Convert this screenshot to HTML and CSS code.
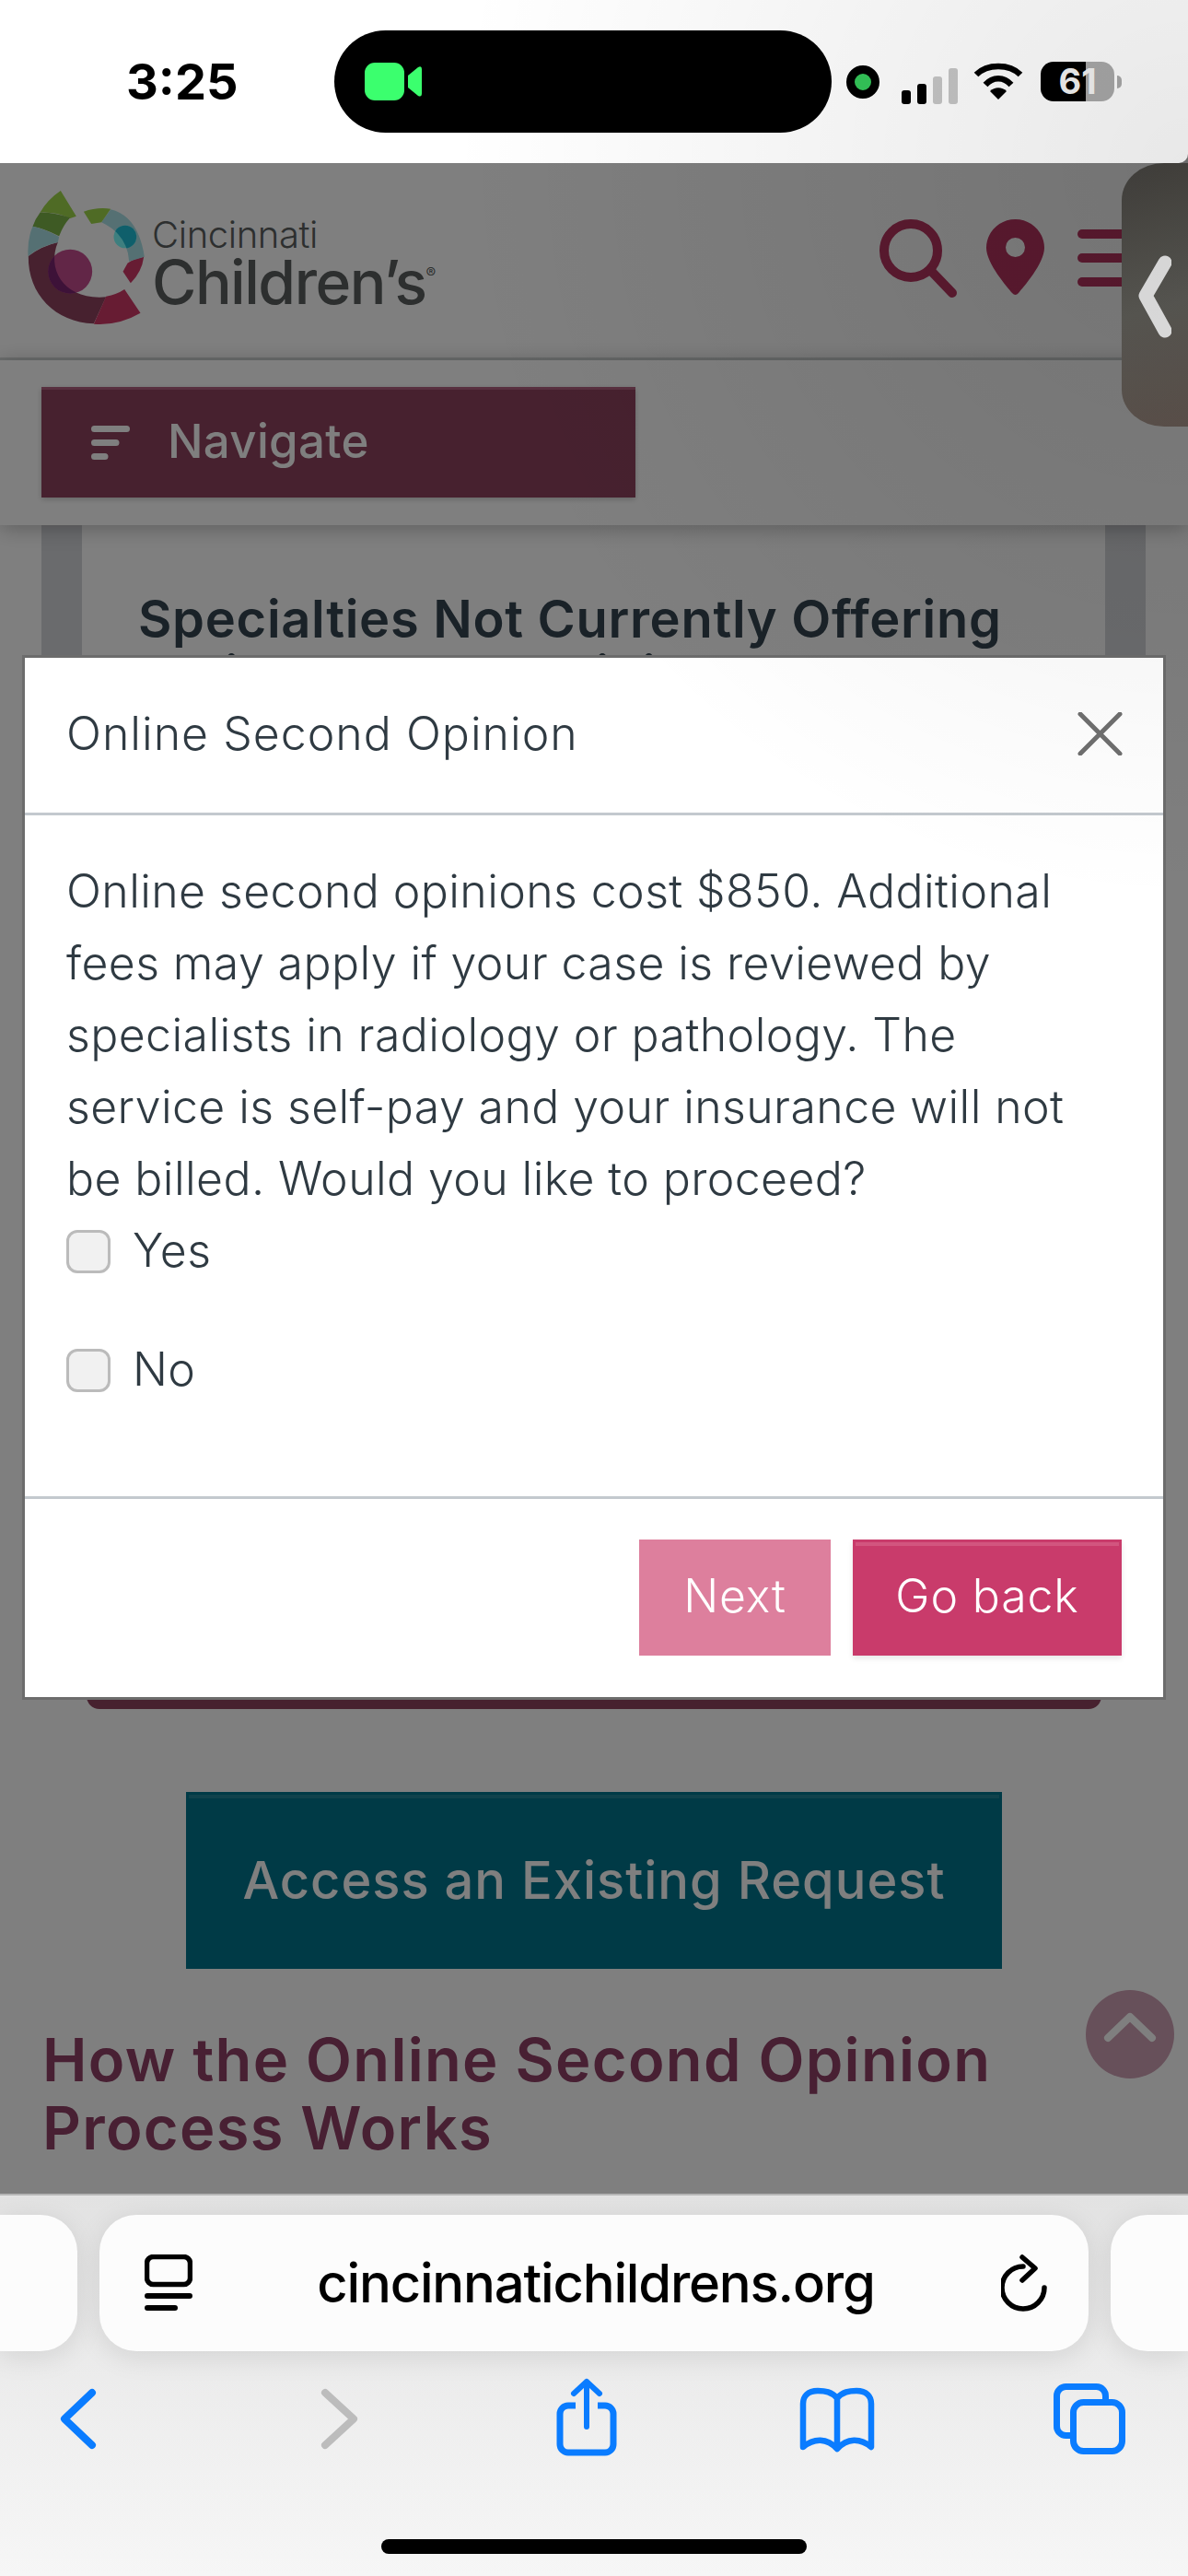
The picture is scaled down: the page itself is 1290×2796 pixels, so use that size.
FILE: index.html
```html
<!DOCTYPE html>
<html lang="en">
  <head>
    <meta charset="UTF-8" />
    <meta name="viewport" content="width=device-width, initial-scale=1.0" />
    <title>Online Second Opinion</title>
    <link rel="stylesheet" href="styles.css">
  </head>
  <body>
    <div class="phone">
      <header class="statusBar">
        <span class="time">3:25</span>
        <div class="island">
          <svg class="camIcon" width="62" height="42" viewBox="0 0 62 42">
            <rect x="0" y="0" width="43" height="41" rx="11" fill="#3bff6e" />
            <path d="M47 14 L58 5 Q62 3 62 7 V33 Q62 38 58 36 L47 27 Z" fill="#3bff6e" />
          </svg>
        </div>
        <span class="micDot"></span>
        <svg class="signal" width="61" height="39" viewBox="0 0 61 39">
          <rect x="0" y="24" width="10" height="15" rx="3" fill="#000" />
          <rect x="17" y="17" width="10" height="22" rx="3" fill="#000" />
          <rect x="34" y="9" width="10" height="30" rx="3" fill="#c6c6c6" />
          <rect x="51" y="0" width="10" height="39" rx="3" fill="#c6c6c6" />
        </svg>
        <svg class="wifi" width="54" height="40" viewBox="0 0 54 40">
          <path d="M3 13 C15 1 39 1 51 13" fill="none" stroke="#000" stroke-width="6.5" />
          <path d="M13 24 C21 15 33 15 41 24" fill="none" stroke="#000" stroke-width="6.5" />
          <path d="M18 31 C23 26 31 26 36 31 L27 40 Z" fill="#000" />
        </svg>
        <div class="battery">61</div>
        <span class="batteryNub"></span>
      </header>

      <div class="page">
        <div class="siteHeader">
          <div class="logo">
            <svg class="logoMark" width="127" height="145" viewBox="90 82 380 435">
              <defs>
                <clipPath id="plumArc"><path d="M92 295 Q135 262 188 250 C150 340 210 440 345 428 L305 515 C180 510 90 420 92 295 Z" /></clipPath>
                <clipPath id="tealArc"><path d="M360 143 Q450 165 470 297 L420 312 Q415 225 330 185 Z" /></clipPath>
              </defs>
              <path d="M92 295 Q135 262 188 250 C150 340 210 440 345 428 L305 515 C180 510 90 420 92 295 Z" fill="#8e425e" />
              <path d="M345 426 Q380 420 405 403 L457 480 Q385 522 305 516 Z" fill="#ce3866" />
              <path d="M468 297 Q430 305 415 318 L400 345 L425 383 Q462 345 468 297 Z" fill="#ce3866" />
              <path d="M360 143 Q450 165 470 297 L420 312 Q415 225 330 185 Z" fill="#aae0e6" />
              <path d="M272 150 Q315 135 360 141 L330 185 L297 190 Z" fill="#9ed64a" />
              <path d="M197 82 L248 165 L228 172 Q180 150 130 153 Q155 110 197 82 Z" fill="#9ed64a" />
              <path d="M130 153 Q180 152 228 170 Q205 195 192 230 Q145 205 106 198 Q115 172 130 153 Z" fill="#7cb448" />
              <path d="M106 198 Q150 208 192 232 L188 250 Q130 262 91 295 Q88 240 106 198 Z" fill="#aae0e6" />
              <circle cx="228" cy="345" r="72" fill="#c44c8e" />
              <circle cx="228" cy="345" r="72" fill="#7a2470" clip-path="url(#plumArc)" />
              <circle cx="407" cy="232" r="37" fill="#7cffff" />
              <circle cx="407" cy="232" r="37" fill="#1ebed6" clip-path="url(#tealArc)" />
            </svg>
            <div class="logoText">
              <span class="logoCity">Cincinnati</span>
              <span class="logoName">Children’s<sup>®</sup></span>
            </div>
          </div>
          <div class="headerIcons">
            <svg width="85" height="85" viewBox="0 0 85 85">
              <circle cx="34" cy="34" r="29" fill="none" stroke="#b83460" stroke-width="10" />
              <path d="M56 56 L79 80" stroke="#b83460" stroke-width="10" stroke-linecap="round" />
            </svg>
            <svg width="63" height="84" viewBox="0 0 63 84">
              <path fill-rule="evenodd" fill="#b83460" d="M31.5 0 C49 0 63 14 63 31 C63 48 40 74 35 80 Q31.5 84 28 80 C23 74 0 48 0 31 C0 14 14 0 31.5 0 Z M31.5 20 A10.5 10.5 0 1 0 31.5 41 A10.5 10.5 0 1 0 31.5 20 Z" />
            </svg>
            <div class="burger"><span></span><span></span><span></span></div>
          </div>
        </div>

        <div class="navStrip">
          <button class="navBtn">
            <svg width="42" height="37" viewBox="0 0 42 37">
              <path d="M3.5 3.5 H38.5 M3.5 18.5 H27 M3.5 33.5 H15" stroke="#fff" stroke-width="7" stroke-linecap="round" />
            </svg>
            <span class="navLabel">Navigate</span>
          </button>
        </div>

        <main>
          <section class="card">
            <h3>Specialties Not Currently Offering Online Second Opinions</h3>
          </section>
          <div class="startBar"></div>
          <a class="accessBtn" href="#">Access an Existing Request</a>
          <h2>How the Online Second Opinion Process Works</h2>
        </main>

        <div class="scrollTop">
          <svg width="62" height="36" viewBox="0 0 62 36">
            <path d="M7 29 L31 6 L55 29" fill="none" stroke="#fff" stroke-width="8" stroke-linecap="round" stroke-linejoin="round" />
          </svg>
        </div>

        <div class="backdrop"></div>

        <div class="modal">
          <div class="modalHead">
            <span>Online Second Opinion</span>
            <svg width="49" height="47" viewBox="0 0 49 47">
              <path d="M3 2 L46 45 M46 2 L3 45" stroke="#6f6f6f" stroke-width="5" stroke-linecap="round" />
            </svg>
          </div>
          <div class="modalBody">
            <p>Online second opinions cost $850. Additional fees may apply if your case is reviewed by specialists in radiology or pathology. The service is self-pay and your insurance will not be billed. Would you like to proceed?</p>
            <label class="choice"><input type="checkbox" />Yes</label>
            <label class="choice"><input type="checkbox" />No</label>
          </div>
          <div class="modalFoot">
            <button class="btnNext">Next</button>
            <button class="btnBack">Go back</button>
          </div>
        </div>
      </div>

      <div class="sidePanel">
        <svg width="36" height="90" viewBox="0 0 36 90">
          <path d="M29 8 L8 44 L29 82" fill="none" stroke="#e8e8e8" stroke-width="15" stroke-linecap="round" stroke-linejoin="round" />
        </svg>
      </div>

      <footer class="safari">
        <div class="tabRow">
          <div class="tabEdge left"></div>
          <div class="urlBar">
            <svg width="52" height="62" viewBox="0 0 52 62">
              <rect x="2.5" y="2.5" width="47" height="30" rx="7" fill="none" stroke="#000" stroke-width="5.5" />
              <path d="M3 47 H49 M3 60 H33" stroke="#000" stroke-width="6" stroke-linecap="round" transform="translate(0 -2)" />
            </svg>
            <span class="url">cincinnatichildrens.org</span>
            <svg class="reload" width="50" height="62" viewBox="0 0 50 62">
              <path d="M47 36 A23 23 0 1 1 24 13" fill="none" stroke="#000" stroke-width="5.5" stroke-linecap="round" />
              <path d="M23 3 L37 15 L23 28" fill="none" stroke="#000" stroke-width="5.5" stroke-linecap="round" stroke-linejoin="round" />
            </svg>
          </div>
          <div class="tabEdge right"></div>
        </div>
        <div class="toolbar">
          <svg width="100" height="90" viewBox="0 0 100 90">
            <path d="M65 17 L35 45.500 L65 74" fill="none" stroke="#0a7cff" stroke-width="8" stroke-linecap="round" stroke-linejoin="round" />
          </svg>
          <svg width="100" height="90" viewBox="0 0 100 90">
            <path d="M44 17 L75 45.500 L44 74" fill="none" stroke="#bcbcbc" stroke-width="8" stroke-linecap="round" stroke-linejoin="round" />
          </svg>
          <svg width="100" height="90" viewBox="0 0 100 90">
            <path d="M41 31 H33 a9 9 0 0 0 -9 9 V73 a9 9 0 0 0 9 9 H73 a9 9 0 0 0 9 -9 V40 a9 9 0 0 0 -9 -9 H65" fill="none" stroke="#0a7cff" stroke-width="7" />
            <path d="M39 18 L53 5 L67 18 M53 5 V54" fill="none" stroke="#0a7cff" stroke-width="6" stroke-linecap="round" stroke-linejoin="round" />
          </svg>
          <svg width="100" height="90" viewBox="0 0 100 90">
            <path d="M51 23 C45 16 38 15 30 15 C19 15 14 21 14 29 V76 C26 66 40 66 51 78 C62 66 76 66 88 76 V29 C88 21 83 15 72 15 C64 15 57 16 51 23 Z M51 23 V78" fill="none" stroke="#0a7cff" stroke-width="6.500" stroke-linejoin="round" />
          </svg>
          <svg width="100" height="90" viewBox="0 0 100 90">
            <rect x="33.500" y="27.500" width="53" height="53" rx="11" fill="none" stroke="#0a7cff" stroke-width="7" />
            <path d="M68.500 27 V21 a10 10 0 0 0 -10 -10.500 H26 a10 10 0 0 0 -10.500 10 V53 a10 10 0 0 0 10 10.500 H33" fill="none" stroke="#0a7cff" stroke-width="7" />
          </svg>
        </div>
        <div class="homeBar"></div>
      </footer>

      <div class="sheen"></div>
    </div>
  </body>
</html>
```

FILE: styles.css
```css
html {
  font-family: 'Inter', 'Liberation Sans', sans-serif;
}
body {
  margin: 0;
}
.phone {
  position: relative;
  width: 1290px;
  height: 2796px;
  overflow: hidden;
  display: flex;
  flex-direction: column;
  background: #777;
}

/* status bar */
.statusBar {
  flex: 0 0 177px;
  display: flex;
  align-items: center;
  padding-left: 137px;
  background: #fff;
  border-bottom-right-radius: 10px;
}
.time {
  width: 226px;
  font-size: 54px;
  font-weight: 700;
  color: #000;
}
.island {
  width: 540px;
  height: 111px;
  border-radius: 56px;
  background: #000;
  display: flex;
  align-items: center;
  padding-left: 33px;
  box-sizing: border-box;
}
.camIcon {
  width: 62px;
}
.micDot {
  width: 18px;
  height: 18px;
  margin-left: 16px;
  border: 9px solid #000;
  border-radius: 50%;
  background: #34c759;
}
.signal {
  margin-left: 24px;
  margin-top: 10px;
}
.wifi {
  margin-left: 17px;
  margin-top: -2px;
}
.battery {
  width: 80px;
  height: 43px;
  margin-left: 19px;
  border-radius: 14px;
  background: linear-gradient(90deg, #000 61%, #aaa 61%);
  color: #f4f4f4;
  font-size: 38px;
  font-weight: 700;
  line-height: 43px;
  text-align: center;
}
.batteryNub {
  width: 5px;
  height: 14px;
  margin-left: 3px;
  border-radius: 0 6px 6px 0;
  background: #aaa;
}

/* page behind the dialog */
.page {
  position: relative;
  flex: 0 0 2204px;
  overflow: hidden;
  background: #fff;
}
.siteHeader {
  height: 214px;
  box-sizing: border-box;
  display: flex;
  justify-content: space-between;
  padding: 30px 0 0 30px;
  border-bottom: 3px solid #d8dcdc;
}
.logo {
  display: flex;
  height: 145px;
}
.logoText {
  display: flex;
  flex-direction: column;
  margin-left: 8px;
  color: #5a5e5e;
}
.logoCity {
  margin-top: 25px;
  font-size: 40px;
  font-weight: 300;
  line-height: 46px;
  letter-spacing: -0.4px;
}
.logoName {
  margin-top: -2px;
  font-size: 66px;
  font-weight: 500;
  line-height: 60px;
  letter-spacing: -1.5px;
}
.logoName sup {
  font-size: 16px;
  font-weight: 400;
  vertical-align: 28px;
  line-height: 0;
  letter-spacing: 0;
}
.headerIcons {
  display: flex;
  gap: 31px;
  padding-top: 31px;
  height: 85px;
}
.burger {
  width: 120px;
  margin-left: 5px;
  padding-top: 11px;
  display: flex;
  flex-direction: column;
  gap: 16px;
}
.burger span {
  height: 10px;
  border-radius: 5px;
  background: #b83460;
}
.navStrip {
  position: relative;
  height: 179px;
  box-sizing: border-box;
  padding: 29px 45px;
  background: #fff;
  box-shadow: 0 3px 22px rgba(0, 0, 0, 0.28);
}
.navBtn {
  width: 645px;
  height: 120px;
  display: flex;
  align-items: center;
  gap: 41px;
  padding: 0 0 0 54px;
  border: none;
  background: linear-gradient(#b0607e 3px, #8e425e 3px);
  box-shadow: 0 2px 6px rgba(0, 0, 0, 0.2);
  color: #fff;
  font-family: inherit;
  font-size: 51px;
  font-weight: 500;
  letter-spacing: 0.3px;
}
.navLabel {
  padding-bottom: 4px;
}
.card {
  height: 1170px;
  box-sizing: border-box;
  margin: 0 46px 0 45px;
  padding: 72px 0 0 61px;
  border-left: 44px solid #d4d6da;
  border-right: 44px solid #d4d6da;
}
.card h3 {
  margin: 0;
  color: #344450;
  font-size: 56px;
  font-weight: 600;
  line-height: 60px;
  letter-spacing: 0.7px;
}
.startBar {
  height: 115px;
  margin: 0 94px;
  border-radius: 0 0 14px 14px;
  background: #8e425e;
}
.accessBtn {
  display: block;
  width: 886px;
  height: 192px;
  margin: 90px 0 0 202px;
  box-sizing: border-box;
  padding-top: 58px;
  background: linear-gradient(#208499, #208499) center 3px / calc(100% - 6px) 4px no-repeat, #00758c;
  color: #fff;
  font-size: 56px;
  font-weight: 500;
  line-height: 76px;
  letter-spacing: 1px;
  text-align: center;
  text-decoration: none;
}
main h2 {
  margin: 62px 0 0 46px;
  width: 1100px;
  color: #904066;
  font-size: 65px;
  font-weight: 600;
  line-height: 74px;
  letter-spacing: 1.3px;
}
.scrollTop {
  position: absolute;
  top: 1983px;
  left: 1179px;
  width: 96px;
  height: 96px;
  display: flex;
  align-items: center;
  justify-content: center;
  border-radius: 50%;
  background: #cea0b4;
}
.scrollTop svg {
  margin-top: -14px;
}
.backdrop {
  position: absolute;
  inset: 0;
  background: rgba(0, 0, 0, 0.5);
}

/* dialog */
.modal {
  position: absolute;
  top: 537px;
  left: 27px;
  width: 1236px;
  height: 1128px;
  display: flex;
  flex-direction: column;
  background: #fff;
  box-shadow: 0 0 0 3px #6c6c6c;
  color: #2f3a42;
  font-size: 50px;
  font-weight: 300;
  letter-spacing: 0.4px;
}
.modalHead {
  flex: 0 0 171px;
  box-sizing: border-box;
  display: flex;
  align-items: center;
  justify-content: space-between;
  padding: 0 44px 4px 45px;
  border-bottom: 3px solid #c3c9ce;
  letter-spacing: 1px;
}
.modalBody {
  flex: 1;
  padding: 43px 45px 0;
  line-height: 78px;
}
.modalBody p {
  margin: 0;
}
.choice {
  display: flex;
  align-items: center;
  gap: 24px;
  height: 78px;
  margin-bottom: 51px;
}
.choice input {
  appearance: none;
  width: 48px;
  height: 47px;
  margin: 2px 0 0;
  box-sizing: border-box;
  border: 3px solid #bbb;
  border-radius: 12px;
  background: #f1f1f1;
}
.modalFoot {
  flex: 0 0 218px;
  box-sizing: border-box;
  display: flex;
  justify-content: flex-end;
  gap: 24px;
  padding: 44px 45px 45px;
  border-top: 3px solid #c3c9ce;
}
.modalFoot button {
  height: 126px;
  padding: 0 0 4px;
  border: none;
  color: #fff;
  font-family: inherit;
  font-size: 50px;
  font-weight: 300;
  letter-spacing: 0.85px;
}
.btnNext {
  width: 208px;
  background: #dd7f9d;
}
.btnBack {
  width: 292px;
  background: linear-gradient(#d2557f, #d2557f) center 3px / calc(100% - 6px) 4px no-repeat, #c93b6b;
  box-shadow: 0 3px 6px rgba(0, 0, 0, 0.1);
}

/* browser extension handle */
.sidePanel {
  position: absolute;
  top: 177px;
  right: 0;
  width: 72px;
  height: 286px;
  display: flex;
  align-items: center;
  justify-content: flex-start;
  padding: 4px 0 0 18px;
  box-sizing: border-box;
  border-radius: 46px 0 0 46px / 40px 0 0 40px;
  background: linear-gradient(165deg, #44423e 0%, #5b5a55 55%, #5d524c 100%);
}

/* safari chrome */
.safari {
  flex: 1;
  box-sizing: border-box;
  border-top: 2px solid #b5b5b5;
  background: linear-gradient(#e2e2e2, #f1f1f1 72%, #f6f6f6);
}
.tabRow {
  display: flex;
  gap: 24px;
  margin-top: 21px;
  height: 148px;
}
.tabEdge {
  flex: 0 0 84px;
  background: #fcfcfc;
  box-shadow: 0 6px 30px rgba(0, 0, 0, 0.1);
}
.tabEdge.left {
  border-radius: 0 40px 40px 0;
}
.tabEdge.right {
  border-radius: 40px 0 0 40px;
}
.urlBar {
  flex: 1;
  display: grid;
  grid-template-columns: 1fr auto 1fr;
  align-items: center;
  padding: 0 45px 0 49px;
  border-radius: 40px;
  background: #fcfcfc;
  box-shadow: 0 6px 30px rgba(0, 0, 0, 0.1);
}
.url {
  color: #000;
  font-size: 58px;
  font-weight: 500;
  letter-spacing: -1.2px;
}
.reload {
  justify-self: end;
}
.toolbar {
  display: flex;
  justify-content: space-between;
  margin-top: 28px;
  padding: 0 58px 0 35px;
  height: 90px;
}
.homeBar {
  width: 462px;
  height: 16px;
  margin: 86px auto 0;
  border-radius: 8px;
  background: #000;
}

/* light falloff on the glass, top right */
.sheen {
  position: absolute;
  inset: 0;
  pointer-events: none;
  background: radial-gradient(circle 800px at 1290px 180px, rgba(0, 0, 0, 0.09), rgba(0, 0, 0, 0) 100%);
}
```
